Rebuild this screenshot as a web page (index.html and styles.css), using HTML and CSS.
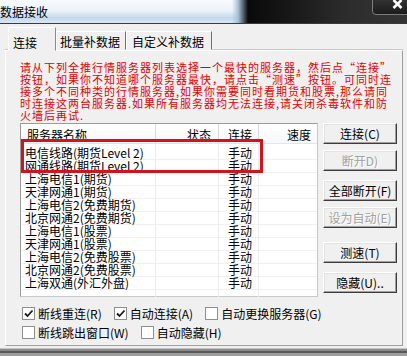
FILE: index.html
```html
<!DOCTYPE html>
<html lang="zh-CN">
<head>
    <meta charset="UTF-8">
    <title>数据接收</title>
    <link rel="stylesheet" href="styles.css">
</head>
<body>
    <div class="titlebar">
        <span class="title">数据接收</span>
        <div class="close">
            <svg width="11" height="10" viewBox="0 0 11 10"><path d="M1.5 1 L9.5 9 M9.5 1 L1.5 9" stroke="#fff" stroke-width="2.6" fill="none"/></svg>
        </div>
    </div>

    <div class="tabs">
        <div class="tab active">连接</div>
        <div class="tab tab-batch">批量补数据</div>
        <div class="tab tab-custom">自定义补数据</div>
    </div>

    <div class="panel">
        <p class="notice">请从下列全推行情服务器列表选择一个最快的服务器，然后点“连接”<br>按钮，如果你不知道哪个服务器最快，请点击“测速”按钮。可同时连<br>接多个不同种类的行情服务器,如果你需要同时看期货和股票,那么请同<br>时连接这两台服务器.如果所有服务器均无法连接,请关闭杀毒软件和防<br>火墙后再试.</p>

        <div class="main">
            <div class="list">
                <div class="list-head">
                    <div class="col-name">服务器名称</div>
                    <div class="col-state">状态</div>
                    <div class="col-conn">连接</div>
                    <div class="col-speed">速度</div>
                </div>
                <div class="list-body" id="rows"></div>
                <!-- annotation box -->
                <div class="highlight"></div>
            </div>

            <div class="buttons">
                <div class="btn">连接(C)</div>
                <div class="btn disabled gap-s">断开D)</div>
                <div class="btn gap-m">全部断开(F)</div>
                <div class="btn disabled gap-s">设为自动(E)</div>
                <div class="btn gap-l">测速(T)</div>
                <div class="btn gap-m">隐藏(U)..</div>
            </div>
        </div>

        <div class="options">
            <div class="opt-row">
                <label class="opt"><span class="box checked"></span>断线重连(R)</label>
                <label class="opt"><span class="box checked"></span>自动连接(A)</label>
                <label class="opt"><span class="box"></span>自动更换服务器(G)</label>
            </div>
            <div class="opt-row">
                <label class="opt"><span class="box"></span>断线跳出窗口(W)</label>
                <label class="opt"><span class="box"></span>自动隐藏(H)</label>
            </div>
        </div>
    </div>

    <div class="frame-bottom"></div>

    <script>
        const servers = [
            "电信线路(期货Level 2)",
            "网通线路(期货Level 2)",
            "上海电信1(期货)",
            "天津网通1(期货)",
            "上海电信2(免费期货)",
            "北京网通2(免费期货)",
            "上海电信1(股票)",
            "天津网通1(股票)",
            "上海电信2(免费股票)",
            "北京网通2(免费股票)",
            "上海双通(外汇外盘)"
        ];

        const rows = document.getElementById("rows");
        const check = '<svg width="11" height="11" viewBox="0 0 11 11"><path d="M2 5.5 L4.5 8 L9.5 2.5" stroke="#1a1a1a" stroke-width="1.8" fill="none"/></svg>';

        servers.forEach((name) => {
            const row = document.createElement("div");
            row.className = "row";
            row.innerHTML =
                '<div class="col-name">' + name + '</div>' +
                '<div class="col-state"></div>' +
                '<div class="col-conn">手动</div>' +
                '<div class="col-speed"></div>';
            rows.appendChild(row);
        });

        document.querySelectorAll(".box.checked").forEach((box) => {
            box.innerHTML = check;
        });
    </script>
</body>
</html>
```

FILE: styles.css
```css
* {
    box-sizing: border-box;
}

body {
    margin: 0;
    width: 407px;
    height: 356px;
    overflow: hidden;
    background-color: #f0f0f0;
    font-family: "Noto Sans CJK SC", sans-serif;
    font-size: 12px;
    color: #000;
}

/* Title bar */
.titlebar {
    display: flex;
    align-items: center;
    height: 24px;
    border-bottom: 1px solid #3a3a3a;
    background:
        linear-gradient(to right, rgba(0, 0, 0, 0) 232px, #a9c2d8 238px, #0a0a0a 248px, #161616 285px, #2c2c2c 345px, #353535 407px),
        linear-gradient(to bottom, #f7fafd 0%, #edf3f9 45%, #c3d8ec 78%, #dbe7f2 100%);
}

.title {
    font-size: 12px;
    line-height: 14px;
}

.close {
    align-self: flex-start;
    display: flex;
    justify-content: center;
    align-items: center;
    margin-left: auto;
    margin-top: -8px;
    margin-right: -15px;
    width: 50px;
    height: 23px;
    border: 1px solid #7c7c7c;
    border-radius: 0 0 4px 4px;
    background: linear-gradient(#3c3c3c, #1c1c1c);
}

/* Tabs */
.tabs {
    display: flex;
    align-items: flex-end;
    padding: 3px 0 0 8px;
    position: relative;
    z-index: 1;
}

.tab {
    height: 19px;
    margin-bottom: 1px;
    padding: 4px 0 0 4px;
    line-height: 12px;
    border: 1px solid;
    border-color: #fff #6e6e6e transparent #fff;
    background-color: #f0f0f0;
    white-space: nowrap;
}

.tab.active {
    width: 48px;
    height: 24px;
    margin-bottom: 0;
    padding-top: 9px;
    padding-left: 4px;
    border-right-color: #8a8a8a;
}

.tab-batch {
    width: 70px;
    padding-left: 3px;
}

.tab-custom {
    width: 86px;
    padding-left: 5px;
}

/* Panel */
.panel {
    margin: -1px 0 0 5px;
    width: 398px;
    height: 296px;
    border: 1px solid;
    border-color: #fff #a0a0a0 #a0a0a0 #fff;
    box-shadow: 0 -1px 0 #c8c8c8;
}

.notice {
    margin: 10px 0 0;
    padding-left: 14px;
    color: #e00000;
    font-size: 11px;
    letter-spacing: 1px;
    line-height: 12px;
    white-space: nowrap;
}

.main {
    display: flex;
    gap: 5px;
    margin-top: 2px;
    padding-left: 14px;
}

/* Server list */
.list {
    position: relative;
    width: 298px;
    height: 174px;
    border: 1px solid #9a9a9a;
    border-right-color: #c8c8c8;
    border-bottom-color: #c8c8c8;
    background-color: #fff;
}

.list-head {
    display: flex;
    height: 20px;
    line-height: 20px;
    border-bottom: 1px solid #e5e5e5;
    background: linear-gradient(#fff, #f6f7f9);
}

.list-head > div {
    padding-top: 1px;
    border-right: 1px solid #dadada;
}

.list-head > div:last-child {
    border-right: none;
}

.col-name {
    width: 135px;
    padding-left: 6px;
    white-space: nowrap;
}

.col-state {
    width: 63px;
    padding-right: 7px;
    text-align: right;
}

.col-conn {
    width: 40px;
    padding-left: 9px;
}

.col-speed {
    width: 58px;
    padding-right: 6px;
    text-align: right;
}

.list-body {
    height: 153px;
    padding-top: 3px;
    background:
        linear-gradient(#ececec, #ececec) 134px 0 / 1px 100% no-repeat,
        linear-gradient(#ececec, #ececec) 197px 0 / 1px 100% no-repeat,
        linear-gradient(#ececec, #ececec) 237px 0 / 1px 100% no-repeat;
}

.row {
    display: flex;
    height: 13px;
    line-height: 12px;
    border-bottom: 1px solid #f0f0f0;
}

.row .col-name {
    padding-left: 4px;
}

.highlight {
    position: absolute;
    left: 0;
    top: 15px;
    width: 242px;
    height: 34px;
    border: 3px solid #d4121c;
}

/* Buttons */
.buttons {
    display: flex;
    flex-direction: column;
    width: 74px;
}

.btn {
    height: 21px;
    line-height: 19px;
    text-align: center;
    white-space: nowrap;
    border: 1px solid;
    border-color: #fff #3c3c3c #3c3c3c #fff;
    box-shadow: inset -1px -1px 0 #a0a0a0, inset 1px 1px 0 #e3e3e3;
    background-color: #f0f0f0;
}

.btn.disabled {
    color: #a0a0a0;
    text-shadow: 1px 1px 0 #fff;
}

.gap-s {
    margin-top: 6px;
}

.gap-m {
    margin-top: 9px;
}

.gap-l {
    margin-top: 14px;
}

/* Options */
.options {
    margin-top: 7px;
    padding-left: 16px;
}

.opt-row {
    display: flex;
    align-items: center;
    height: 19px;
}

.opt {
    display: flex;
    align-items: center;
    gap: 3px;
    margin-right: 12px;
    line-height: 12px;
    white-space: nowrap;
}

.box {
    display: flex;
    justify-content: center;
    align-items: center;
    width: 13px;
    height: 13px;
    border: 1px solid #8e8f8f;
    background-color: #fff;
}

.frame-bottom {
    margin-top: 2px;
    height: 10px;
    background: linear-gradient(#c4c4c4 0 1px, #8a8a8a 1px 3px, #5a5a5a 3px 5px, #9c9c9c 5px);
}
```
